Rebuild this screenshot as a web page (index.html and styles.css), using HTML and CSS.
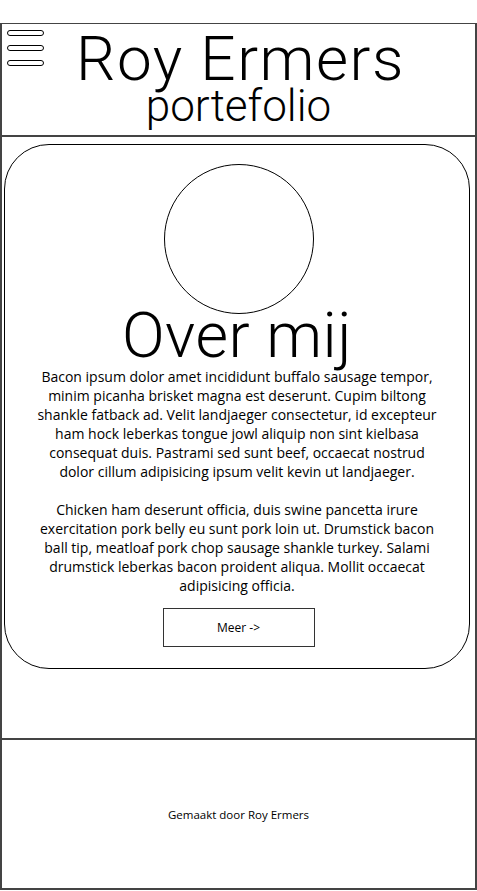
FILE: index.html
```html
<!DOCTYPE html>
<html lang="nl">
<head>
<meta charset="utf-8">
<title>Roy Ermers portefolio</title>
<link rel="stylesheet" href="styles.css">
</head>
<body>
<div class="page">
  <header class="header">
    <button class="menu" aria-label="Menu">
      <span class="bar"></span>
      <span class="bar"></span>
      <span class="bar"></span>
    </button>
    <h1 class="name">Roy Ermers</h1>
    <p class="sub">portefolio</p>
  </header>
  <main class="main">
    <section class="card">
      <div class="avatar"></div>
      <h2 class="title">Over mij</h2>
      <p class="text">Bacon ipsum dolor amet incididunt buffalo sausage tempor, minim picanha brisket magna est deserunt. Cupim biltong shankle fatback ad. Velit landjaeger consectetur, id excepteur ham hock leberkas tongue jowl aliquip non sint kielbasa consequat duis. Pastrami sed sunt beef, occaecat nostrud dolor cillum adipisicing ipsum velit kevin ut landjaeger.</p>
      <p class="text">Chicken ham deserunt officia, duis swine pancetta irure exercitation pork belly eu sunt pork loin ut. Drumstick bacon ball tip, meatloaf pork chop sausage shankle turkey. Salami drumstick leberkas bacon proident aliqua. Mollit occaecat adipisicing officia.</p>
      <a class="more" href="#">Meer -&gt;</a>
    </section>
  </main>
  <footer class="footer">Gemaakt door Roy Ermers</footer>
</div>
</body>
</html>
```
FILE: styles.css
```css
html, body {
  margin: 0;
  padding: 0;
  background: #fff;
}
body {
  font-family: "Open Sans", "Noto Sans", sans-serif;
  color: #000;
}
.page {
  margin-top: 23px;
  width: 477px;
  height: 867px;
  box-sizing: border-box;
  border: 2px solid #444;
  border-top-width: 1px;
  display: flex;
  flex-direction: column;
}
.header {
  position: relative;
  height: 113px;
  flex: none;
  box-sizing: border-box;
  border-bottom: 2px solid #444;
  display: flex;
  flex-direction: column;
  align-items: center;
  padding-top: 6px;
}
.menu {
  position: absolute;
  left: 5px;
  top: 6px;
  padding: 0;
  border: 0;
  background: none;
  display: flex;
  flex-direction: column;
  gap: 9px;
}
.bar {
  display: block;
  width: 35px;
  height: 4px;
  border: 1px solid #000;
  border-radius: 4px;
}
.name {
  margin: 0;
  font-family: Roboto, sans-serif;
  font-weight: 300;
  font-size: 62px;
  line-height: 57px;
  letter-spacing: 1.5px;
  padding-left: 4px;
}
.sub {
  margin: 0;
  font-family: Roboto, sans-serif;
  font-weight: 300;
  font-size: 44px;
  line-height: 38px;
}
.main {
  height: 601px;
  flex: none;
  box-sizing: border-box;
  padding: 7px 5px 0 2px;
}
.card {
  height: 525px;
  box-sizing: border-box;
  border: 1px solid #000;
  border-radius: 45px;
  display: flex;
  flex-direction: column;
  align-items: center;
  padding-top: 19px;
}
.avatar {
  width: 150px;
  height: 150px;
  box-sizing: border-box;
  border: 1px solid #000;
  border-radius: 50%;
  margin-left: 3px;
}
.title {
  margin: -6px 0 3px;
  font-family: Roboto, sans-serif;
  font-weight: 300;
  font-size: 63px;
  line-height: 56px;
  letter-spacing: 0.5px;
}
.text {
  margin: 0;
  width: 402px;
  font-size: 14px;
  line-height: 19px;
  text-align: center;
}
.text + .text {
  margin-top: 19px;
}
.more {
  margin-top: 13px;
  margin-left: 3px;
  width: 152px;
  height: 39px;
  box-sizing: border-box;
  border: 1px solid #333;
  display: flex;
  align-items: center;
  justify-content: center;
  font-size: 12px;
  color: #000;
  text-decoration: none;
}
.footer {
  flex: 1;
  box-sizing: border-box;
  border-top: 2px solid #444;
  display: flex;
  align-items: center;
  justify-content: center;
  font-size: 11.5px;
}
```
